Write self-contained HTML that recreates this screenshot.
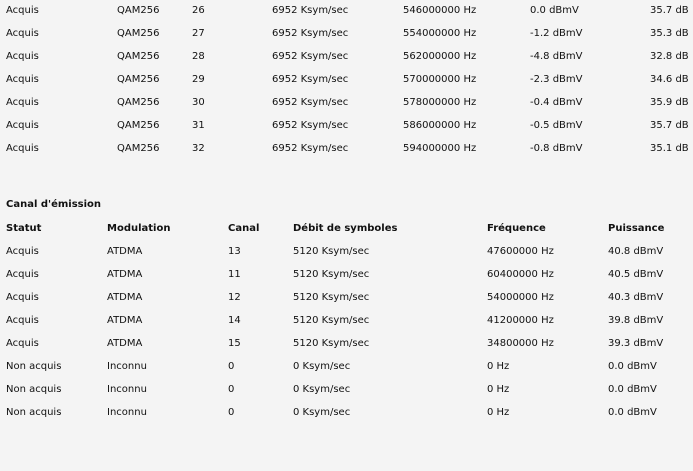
<!DOCTYPE html>
<html><head><meta charset="utf-8"><style>
html,body{margin:0;padding:0;background:#f4f4f4;width:693px;height:471px;overflow:hidden}
body{font-family:"DejaVu Sans","Liberation Sans",sans-serif;font-size:10px;color:#111;position:relative}
.r{position:absolute;white-space:nowrap;height:14px;line-height:14px}
.r span{position:absolute;top:0}
.b{font-weight:bold}
</style></head><body>
<div id="c"></div>
<script>
var c=document.getElementById('c'),h='';
var t1=[[26,'546000000','0.0','35.7'],[27,'554000000','-1.2','35.3'],[28,'562000000','-4.8','32.8'],[29,'570000000','-2.3','34.6'],[30,'578000000','-0.4','35.9'],[31,'586000000','-0.5','35.7'],[32,'594000000','-0.8','35.1']];
var x1=[6,117,192,272,403,530,650];
t1.forEach(function(r,i){var v=['Acquis','QAM256',r[0],'6952 Ksym/sec',r[1]+' Hz',r[2]+' dBmV',r[3]+' dB'];
h+='<div class="r" style="top:'+(4+i*23)+'px">';v.forEach(function(s,j){h+='<span style="left:'+x1[j]+'px">'+s+'</span>'});h+='</div>';});
h+='<div class="r b" style="top:198px;left:6px">Canal d\'émission</div>';
var x2=[6,107,228,293,487,608];
var hd=['Statut','Modulation','Canal','Débit de symboles','Fréquence','Puissance'];
h+='<div class="r b" style="top:222px">';hd.forEach(function(s,j){h+='<span style="left:'+x2[j]+'px">'+s+'</span>'});h+='</div>';
var t2=[['Acquis','ATDMA','13','5120 Ksym/sec','47600000 Hz','40.8 dBmV'],['Acquis','ATDMA','11','5120 Ksym/sec','60400000 Hz','40.5 dBmV'],['Acquis','ATDMA','12','5120 Ksym/sec','54000000 Hz','40.3 dBmV'],['Acquis','ATDMA','14','5120 Ksym/sec','41200000 Hz','39.8 dBmV'],['Acquis','ATDMA','15','5120 Ksym/sec','34800000 Hz','39.3 dBmV'],['Non acquis','Inconnu','0','0 Ksym/sec','0 Hz','0.0 dBmV'],['Non acquis','Inconnu','0','0 Ksym/sec','0 Hz','0.0 dBmV'],['Non acquis','Inconnu','0','0 Ksym/sec','0 Hz','0.0 dBmV']];
t2.forEach(function(v,i){h+='<div class="r" style="top:'+(245+i*23)+'px">';v.forEach(function(s,j){h+='<span style="left:'+x2[j]+'px">'+s+'</span>'});h+='</div>';});
c.innerHTML=h;
</script>
</body></html>
